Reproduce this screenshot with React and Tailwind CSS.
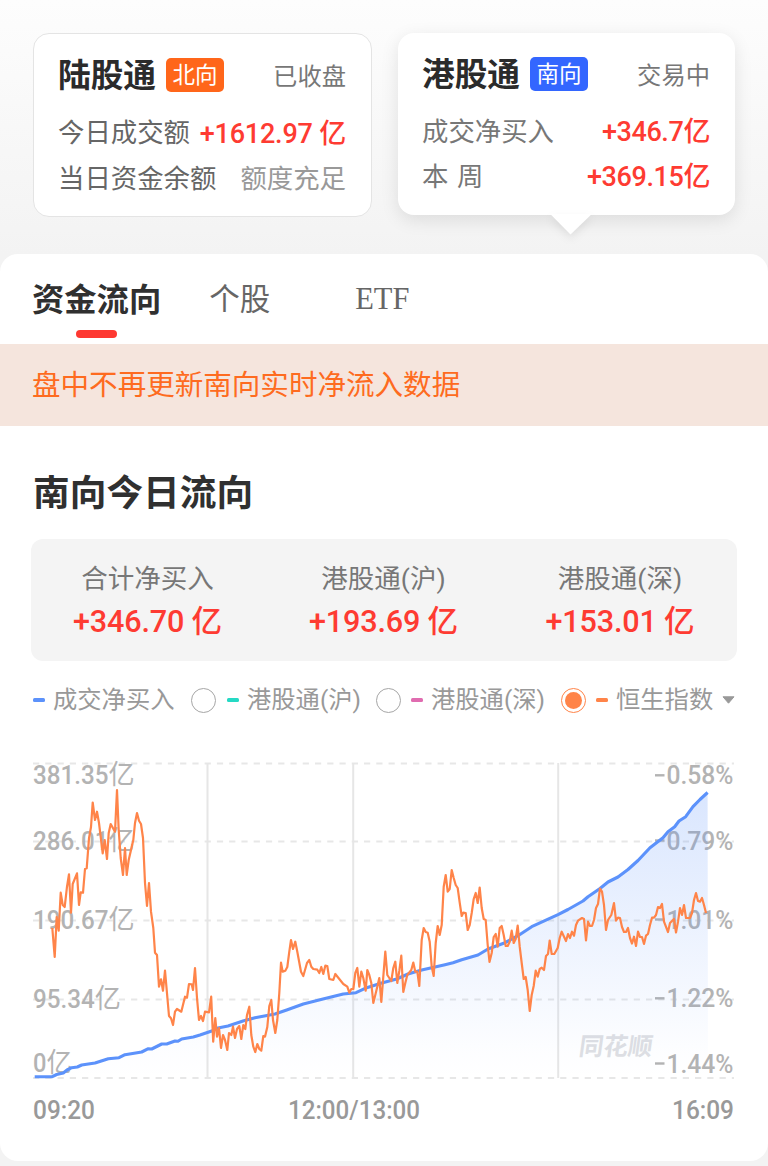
import React from 'react';

const stats = [
  { label: '合计净买入', value: '+346.70' },
  { label: '港股通(沪)', value: '+193.69' },
  { label: '港股通(深)', value: '+153.01' },
];

const gridLines = [763.5, 841.5, 920.5, 999.5, 1078];

const leftLabels = [
  { text: '381.35亿', y: 784.3, width: 101.5 },
  { text: '286.01亿', y: 849.5, width: 101.5 },
  { text: '190.67亿', y: 928.5, width: 101.5 },
  { text: '95.34亿', y: 1007.5, width: 88 },
  { text: '0亿', y: 1072, width: 39 },
];

const rightLabels = [
  { num: '0.58%', y: 784.3 },
  { num: '0.79%', y: 849.5 },
  { num: '1.01%', y: 928.5 },
  { num: '1.22%', y: 1007.3 },
  { num: '1.44%', y: 1072.5 },
];

const buyPoints =
  '34.7,1076.7 52.3,1076.7 56.7,1074.5 63.3,1073 67,1070 71.7,1067.7 77.3,1067 81.7,1065 95,1063 108.3,1058.7 119,1057.7 125,1054.7 141.7,1052 148.3,1048.7 151.7,1049 161.7,1044 166.7,1044 175,1041 178,1041.3 181.7,1039 193.3,1037 200,1035 211.7,1031 216.7,1028.3 228,1026 243,1021 255,1017.7 275,1014 286.7,1010 303.3,1004 323,999 343.3,994 356,992.7 366.7,987.7 381.7,983 396.7,979 408,974 421.7,970 445,964.7 453,962.7 461.7,959.7 478,955 488,949 505,942.7 518,935.7 531.7,926.7 558,914.7 568,909.5 583,901 588,896.7 600,888.5 608,882 618,877 628,869.5 638,860.5 650,847.7 663,837.7 668,831.7 674.7,826.7 679,821 685.7,816.7 693,806.7 700,799.5 707.6,792.5';

const indexPoints =
  '52.3,928 54.7,957 56.7,917 58.7,930.7 60.7,892.7 62.7,905 64.7,907 67,886.7 69,874.3 71,912.7 72.7,884 77,873.3 79,905 80.7,892.3 83,892.7 85,869 86.7,868.3 89,838.3 91,827 92.7,802.5 95,820 97,811.7 99,823 102.7,853.3 104.7,840 107,859 108.7,833 110.7,824 115,831.7 117,790 118.7,830 120.7,858 123,875 125,848 126.7,875 128.7,860 133.3,840 135,823 137,813 139,820.7 141,824 143,838 145,883 147,906 149,883 151,911.7 153.3,928 155,952.7 157,955 159,986.7 161,979.3 163,990.7 165,970.7 169,1016 171,1018.3 173,1025 175,1011.7 177,1009 181.3,1011.7 185,996.7 187,997.7 189,984 191.7,984.3 193,990 195,968 197,998 199,1020 201,1016 203,1021 205,1011.7 209,1012.3 211.2,996.7 213.2,1041.7 215.3,1018 217,1036.7 219,1028 221,1048 223,1035 225,1040 227.3,1050 229,1033 231.3,1035 233,1026.7 235,1038 237,1029 239.3,1026 241.3,1039 243.3,1025 245.3,1029 247,1015 249.3,1006.7 251.3,1035 253.3,1046.7 255.3,1052 257.3,1044 259.3,1049 261.3,1050.7 263.3,1036 265,1036.7 267.3,1027 269.3,1006 271.3,1000 273,1020 275.3,1033 277.3,1020 279.3,993 281,962.7 282.7,971.7 285.3,970.7 287.3,967 289.3,951.7 291,940 293,949 295.3,941.7 297.3,951.7 301,971.7 303.3,976 307,963 309.3,960 311.3,966.7 313.3,969 317.3,969.7 319.3,973 321.3,967 323.3,974 325.3,965.7 327.3,966 329.3,979 333.3,980 335.3,974 339.3,979 343.3,984 347.3,986.7 349.3,992.7 351.3,989 353.3,989 355.3,973 357.3,968 359.3,986.7 361.3,971.7 363.3,978 365.7,990.7 367.3,970 369.3,975 371.3,983 373.3,1003 375.3,995 377.3,986.7 379.3,978 381.3,1002 383.3,976.7 385.3,951.5 387.3,975 391.3,981 393.3,968 395.3,961.7 397.3,983 399.3,971 401.3,955.7 403.3,992 405.3,983 407.3,975 411.3,970 413.3,962.5 415.3,971.7 417.3,971.7 419.3,986 421.7,940 423.7,928 425.7,932 427.7,932.7 429.7,941.7 431.7,966.7 433.7,976 435.7,943 437.7,926 439.7,935 441.7,925 443.7,886.7 445.7,875 447.7,891.7 449.7,889 451.7,870 453.7,878 455.7,885 457.7,888 459.7,902.7 461.7,916 463.3,912.7 465.7,913 467.7,930 469.7,925 471.7,913 473.7,899 475.7,893 477.7,903 479.7,887.5 481.7,908 483.7,919 485.7,920 487.7,945 489.5,962 491.7,953 493.7,937 495.7,934 497.7,946.7 499.7,928 501.7,926 503.7,935 505.7,946 507.7,946 509.7,941.7 511.7,930.7 513.7,943 515.7,939 517.7,925.5 519.7,946.7 521.7,963 523.7,979 525.7,977 527.7,990 529.7,1011 531.7,995 533.7,986 535.7,970.7 537.7,976.7 539.7,969 541.7,967.7 544,970 546,956 548,954 549.7,940.5 551.7,954 554.3,954 557.7,948 559.7,938 561.7,931.7 566,941 568,934 570,938 572,931.7 574,935.7 576,925 578,920.7 582,918 584,919 586,940.5 588,921.7 590,926 592,926 594,920 596,908 598,904 600,888.5 602,891.7 604,905 606,930 608,920 611.3,915 614,903 616,920.7 618,917.7 620,918 622,927 624,932 626,932 628,928 630,938 632,943.5 634,936.7 636,946 638,931.7 640,937 642,937 644,944 646,935.7 648,934 650,925 652,917.7 654,917.7 656,915 658,907 660,908 662,904 664,921.7 668,932 670,923 674,919 676,932.5 678,921.7 680,908 682,915 684,905 686,918 690,918 692,913 694,900 696,893 698,901 700,901.7 702,898 704,905 706,913';

const Amount = ({ value, className }) => (
  <span className={`font-medium text-[#fe3b32] whitespace-pre ${className}`}>{value}</span>
);

const Badge = ({ children, className }) => (
  <span
    className={`mb-[2px] ml-[10px] flex h-[34px] w-[58px] items-center justify-center rounded-[5px] text-[22.5px] leading-none text-white ${className}`}
  >
    {children}
  </span>
);

const Dash = ({ className }) => <span className={`h-1 w-3 shrink-0 rounded-[1.5px] ${className}`} />;

const Radio = ({ checked }) => (
  <span
    className={`flex size-[25px] shrink-0 items-center justify-center rounded-full ${
      checked ? 'border-[1.5px] border-[#ff8449]' : 'border border-[#a6a6a6]'
    }`}
  >
    {checked && <span className="size-[17px] rounded-full bg-[#ff8449]" />}
  </span>
);

const MarketCards = () => (
  <div className="flex h-[254px] items-start pl-[33px] pt-[33px]">
    <div className="h-[184px] w-[339px] rounded-2xl border border-[#e4e4e4] bg-white pl-[24px] pr-[25px] pt-[22px]">
      <div className="flex h-10 items-center">
        <h2 className="text-[32.7px] font-bold leading-none text-[#2b2b2b]">陆股通</h2>
        <Badge className="bg-[#ff661a]">北向</Badge>
        <span className="ml-auto pt-[3px] text-[24.3px] text-[#777777]">已收盘</span>
      </div>
      <div className="mt-[15px] flex h-[46px] items-center justify-between">
        <span className="text-[26.4px] text-[#666666]">今日成交额</span>
        <Amount value="+1612.97 亿" className="text-[27px] tracking-[-0.2px]" />
      </div>
      <div className="flex h-[46px] items-center justify-between">
        <span className="text-[26.4px] text-[#666666]">当日资金余额</span>
        <span className="text-[26.4px] text-[#999999]">额度充足</span>
      </div>
    </div>

    <div className="relative ml-[26px] h-[182px] w-[337px] rounded-2xl bg-white pl-6 pr-[25px] pt-[22px] shadow-[0_5px_18px_rgba(0,0,0,0.10)]">
      <div className="flex h-10 items-center">
        <h2 className="text-[32.7px] font-bold leading-none text-[#2b2b2b]">港股通</h2>
        <Badge className="bg-[#3366ff]">南向</Badge>
        <span className="ml-auto pt-[3px] text-[24.3px] text-[#777777]">交易中</span>
      </div>
      <div className="mt-[15px] flex h-[45px] items-center justify-between">
        <span className="text-[26.4px] text-[#777777]">成交净买入</span>
        <Amount value="+346.7亿" className="text-[27px] tracking-[-0.4px]" />
      </div>
      <div className="flex h-[45px] items-center justify-between">
        <span className="text-[26.4px] text-[#777777] [word-spacing:2px]">本 周</span>
        <Amount value="+369.15亿" className="text-[27px] tracking-[-0.4px]" />
      </div>
      <svg
        className="absolute left-[152px] top-[181px] drop-shadow-[0_4px_4px_rgba(0,0,0,0.08)]"
        width="42"
        height="21"
        viewBox="0 0 42 21"
      >
        <path d="M1 0H41V0.8L20.5 20.5L1 0.8Z" fill="#fff" />
      </svg>
    </div>
  </div>
);

const Tabs = () => (
  <div className="flex h-[90px] pl-8 leading-none">
    <div className="flex flex-col items-center">
      <span className="mt-[30px] text-[32.3px] font-bold text-[#303030]">资金流向</span>
      <span className="mt-[13.5px] h-2 w-[41px] rounded-full bg-[#fe3831]" />
    </div>
    <span className="ml-12 mt-[31px] text-[30.5px] text-[#666666]">个股</span>
    <span className="ml-[85px] mt-[30px] font-['Liberation_Serif',serif] text-[30.5px] text-[#666666]">ETF</span>
  </div>
);

const Legend = () => (
  <div className="mt-[19px] flex h-10 items-center whitespace-nowrap pl-[33px] text-[24.3px] leading-none text-[#999999]">
    <Dash className="bg-[#5c92fb]" />
    <span className="ml-2 w-[122px]">成交净买入</span>
    <span className="ml-4"><Radio /></span>
    <Dash className="ml-[11px] bg-[#25d9c4]" />
    <span className="ml-2 w-[115px]">港股通(沪)</span>
    <span className="ml-[14px]"><Radio /></span>
    <Dash className="ml-[10px] bg-[#e06cb0]" />
    <span className="ml-2 w-[115px]">港股通(深)</span>
    <span className="ml-[15px]"><Radio checked /></span>
    <Dash className="ml-[10px] bg-[#ff8449]" />
    <span className="ml-2 w-[98px]">恒生指数</span>
    <svg className="ml-2" width="13" height="8" viewBox="0 0 13 8">
      <path d="M1 0.8H12L6.5 7.2Z" fill="#999" stroke="#999" strokeLinejoin="round" />
    </svg>
  </div>
);

const FlowChart = () => (
  <svg
    className="block font-['Roboto','Noto_Sans_CJK_SC',sans-serif]"
    width="768"
    height="400"
    viewBox="0 740 768 400"
  >
    <defs>
      <linearGradient id="buyFill" x1="0" y1="792" x2="0" y2="1078" gradientUnits="userSpaceOnUse">
        <stop offset="0" stopColor="#5c92fb" stopOpacity="0.23" />
        <stop offset="0.55" stopColor="#5c92fb" stopOpacity="0.1" />
        <stop offset="0.9" stopColor="#5c92fb" stopOpacity="0.015" />
        <stop offset="1" stopColor="#5c92fb" stopOpacity="0" />
      </linearGradient>
    </defs>

    {gridLines.map((y) => (
      <line key={y} x1="33" x2="734" y1={y} y2={y} stroke="#e7e7e7" strokeWidth="2" strokeDasharray="6.2 6.06" />
    ))}
    {[207.5, 353.2, 558.2].map((x) => (
      <line key={x} x1={x} x2={x} y1="763" y2="1078" stroke="#e6e6e6" strokeWidth="2" />
    ))}

    <g fill="#b3b3b3" fontSize="25" fontWeight="500">
      {leftLabels.map(({ text, y, width }) => (
        <text key={text} x="33" y={y} textLength={width} lengthAdjust="spacingAndGlyphs">
          {text.slice(0, -1)}
          <tspan fontSize="27" fontWeight="400">亿</tspan>
        </text>
      ))}
      {rightLabels.map(({ num, y }) => (
        <g key={num}>
          <rect x="655" y={y - 10.2} width="9.5" height="2.4" />
          <text x="666.5" y={y} textLength="67" lengthAdjust="spacingAndGlyphs">{num}</text>
        </g>
      ))}
    </g>

    <text
      transform="translate(578 1054.5) skewX(-8)"
      fill="#dedfe3"
      fontSize="24.5"
      fontWeight="700"
    >
      同花顺
    </text>

    <polygon points={`34.7,1078 ${buyPoints} 708,1078`} fill="url(#buyFill)" />
    <polyline points={buyPoints} fill="none" stroke="#5c92fb" strokeWidth="3.1" strokeLinejoin="round" />
    <polyline points={indexPoints} fill="none" stroke="#ff8449" strokeWidth="2.2" strokeLinejoin="round" />

    <g fill="#999999" fontSize="25" fontWeight="500">
      <text x="33" y="1119.3" textLength="62" lengthAdjust="spacingAndGlyphs">09:20</text>
      <text x="288" y="1119.3" textLength="132" lengthAdjust="spacingAndGlyphs">12:00/13:00</text>
      <text x="672" y="1119.3" textLength="62" lengthAdjust="spacingAndGlyphs">16:09</text>
    </g>
  </svg>
);

export default function App() {
  return (
    <div className="h-[1166px] w-[768px] overflow-hidden bg-[#f4f4f4] bg-[linear-gradient(#fdfdfd,#f3f3f3_254px)] font-['Roboto','Noto_Sans_CJK_SC',sans-serif]">
      <MarketCards />
      <main className="h-[907px] overflow-hidden rounded-[18px] bg-white">
        <Tabs />
        <div className="flex h-[82px] items-center bg-[#f5e5dd] pl-8 pt-[3px] text-[28.55px] text-[#fe6b20]">
          盘中不再更新南向实时净流入数据
        </div>
        <h1 className="mt-[48px] pl-[33px] text-[36.7px] font-bold leading-[40px] text-[#303030]">南向今日流向</h1>
        <section className="ml-[31px] mt-[25px] grid h-[122px] w-[706px] grid-cols-[233px_239px_234px] content-start rounded-xl bg-[#f4f4f4] pt-5">
          {stats.map(({ label, value }) => (
            <div key={label} className="flex flex-col items-center">
              <span className="text-[26.5px] leading-[40px] text-[#777777]">{label}</span>
              <Amount value={`${value} 亿`} className="text-[30.6px] leading-[46px] tracking-[-0.2px]" />
            </div>
          ))}
        </section>
        <Legend />
        <div className="mt-5">
          <FlowChart />
        </div>
      </main>
    </div>
  );
}
